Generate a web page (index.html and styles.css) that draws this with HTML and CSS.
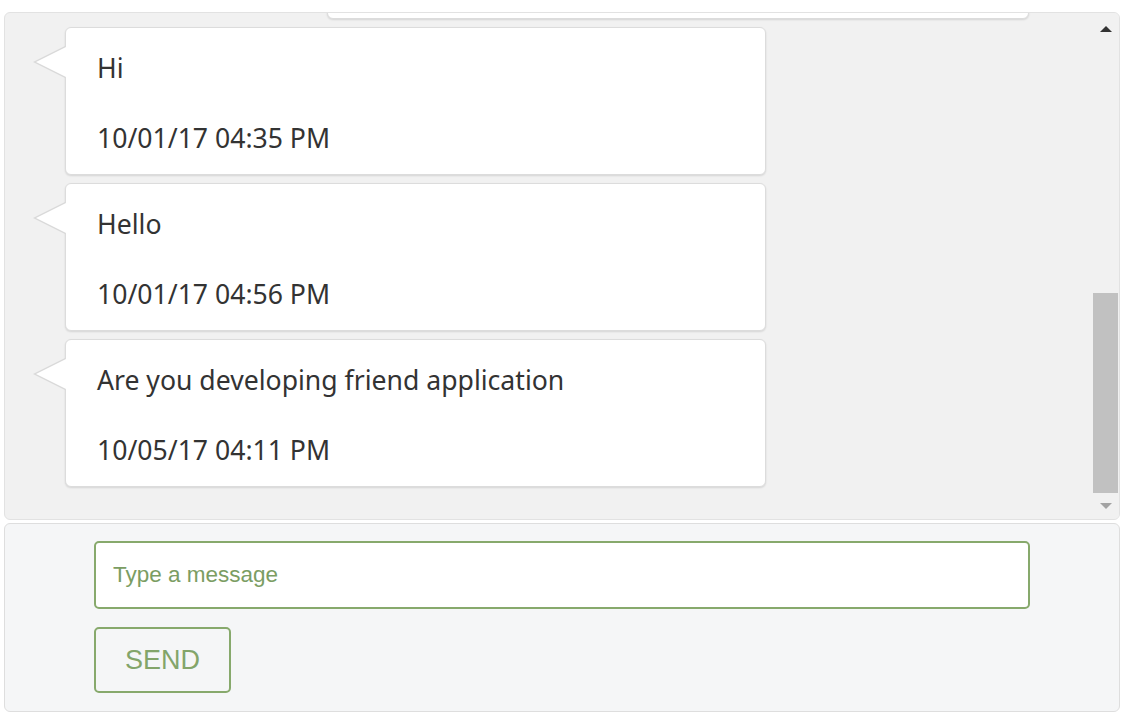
FILE: index.html
```html
<!DOCTYPE html>
<html lang="en">
<head>
<meta charset="utf-8">
<title>Chat</title>
<link rel="stylesheet" href="styles.css">
</head>
<body>
<div class="page">
  <div class="chat">
    <div class="messages">
      <div class="bubble sent"></div>
      <div class="bubble received">
        <p class="text">Hi</p>
        <p class="time">10/01/17 04:35 PM</p>
      </div>
      <div class="bubble received">
        <p class="text">Hello</p>
        <p class="time">10/01/17 04:56 PM</p>
      </div>
      <div class="bubble received">
        <p class="text">Are you developing friend application</p>
        <p class="time">10/05/17 04:11 PM</p>
      </div>
    </div>
    <div class="scrollbar">
      <div class="sb-btn sb-up"><span class="arrow-up"></span></div>
      <div class="sb-track"><div class="sb-thumb"></div></div>
      <div class="sb-btn sb-down"><span class="arrow-down"></span></div>
    </div>
  </div>
  <div class="composer">
    <input class="msg-input" type="text" placeholder="Type a message">
    <button class="send-btn" type="button">SEND</button>
  </div>
</div>
</body>
</html>
```

FILE: styles.css
```css
* { box-sizing: border-box; }

html, body {
  margin: 0;
  padding: 0;
  background: #ffffff;
}

.page {
  padding: 12px 6px 0 4px;
  display: flex;
  flex-direction: column;
  gap: 3px;
}

.chat {
  height: 508px;
  display: flex;
  background: #f1f1f1;
  border: 1px solid #e2e2e2;
  border-radius: 6px;
  overflow: hidden;
}

.messages {
  flex: 1;
  display: flex;
  flex-direction: column;
  justify-content: flex-end;
  overflow: hidden;
  padding: 0 0 32px 0;
}

.bubble {
  position: relative;
  flex: 0 0 auto;
  width: 701px;
  height: 148px;
  margin-top: 8px;
  background: #ffffff;
  border: 1px solid #dcdcdc;
  border-radius: 6px;
  box-shadow: 0 1px 2px rgba(0, 0, 0, 0.12);
  padding: 22px 30px 0 31px;
  font-family: "Noto Sans", "Open Sans", sans-serif;
  font-size: 26.6px;
  color: #333333;
}

.bubble.received {
  margin-left: 60px;
}

.bubble.sent {
  align-self: flex-end;
  margin-right: 64px;
  width: 702px;
}

.bubble.received::before {
  content: "";
  position: absolute;
  left: -33px;
  top: 18px;
  border-style: solid;
  border-width: 16px 32px 16px 0;
  border-color: transparent #d9d9d9 transparent transparent;
}

.bubble.received::after {
  content: "";
  position: absolute;
  left: -30px;
  top: 19px;
  border-style: solid;
  border-width: 15px 30px 15px 0;
  border-color: transparent #ffffff transparent transparent;
}

.text, .time {
  margin: 0;
  line-height: 36px;
  white-space: nowrap;
}

.time {
  margin-top: 34px;
}

.scrollbar {
  width: 26px;
  display: flex;
  flex-direction: column;
  align-items: center;
  background: #f1f1f1;
}

.sb-btn {
  width: 100%;
  display: flex;
  align-items: center;
  justify-content: center;
}

.sb-up { height: 32px; }
.sb-down { height: 26px; }

.arrow-up {
  width: 0;
  height: 0;
  border-style: solid;
  border-width: 0 6px 6px 6px;
  border-color: transparent transparent #333333 transparent;
}

.arrow-down {
  width: 0;
  height: 0;
  border-style: solid;
  border-width: 6px 6px 0 6px;
  border-color: #a3a3a3 transparent transparent transparent;
}

.sb-track {
  flex: 1;
  width: 100%;
  display: flex;
  flex-direction: column;
  justify-content: flex-end;
  padding: 0 1px 0 0;
}

.sb-thumb {
  height: 200px;
  width: 25px;
  background: #c1c1c1;
}

.composer {
  height: 189px;
  background: #f5f6f7;
  border: 1px solid #dedede;
  border-radius: 6px;
  padding: 17px 0 0 89px;
  display: flex;
  flex-direction: column;
  align-items: flex-start;
  gap: 18px;
}

.msg-input {
  width: 936px;
  height: 68px;
  border: 2px solid #87a96c;
  border-radius: 5px;
  background: #ffffff;
  padding: 0 17px;
  font-family: "Liberation Sans", Arial, sans-serif;
  font-size: 22.5px;
  color: #333333;
  outline: none;
}

.msg-input::placeholder {
  color: #7b9d63;
  opacity: 1;
}

.send-btn {
  width: 137px;
  height: 66px;
  border: 2px solid #87a96c;
  border-radius: 5px;
  background: transparent;
  font-family: "Liberation Sans", Arial, sans-serif;
  font-size: 27px;
  color: #83a56a;
  padding: 0;
  cursor: pointer;
}
```
